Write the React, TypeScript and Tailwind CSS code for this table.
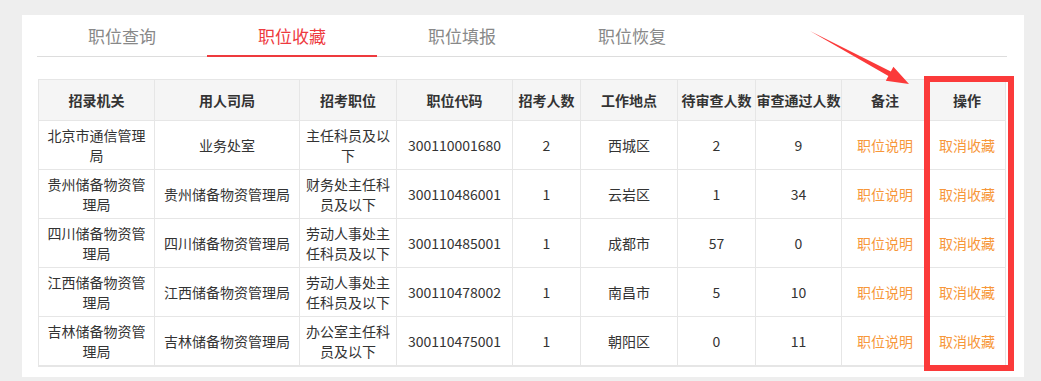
import React from "react";

const rows = [
  ["北京市通信管理局", "业务处室", "主任科员及以下", "300110001680", "2", "西城区", "2", "9"],
  ["贵州储备物资管理局", "贵州储备物资管理局", "财务处主任科员及以下", "300110486001", "1", "云岩区", "1", "34"],
  ["四川储备物资管理局", "四川储备物资管理局", "劳动人事处主任科员及以下", "300110485001", "1", "成都市", "57", "0"],
  ["江西储备物资管理局", "江西储备物资管理局", "劳动人事处主任科员及以下", "300110478002", "1", "南昌市", "5", "10"],
  ["吉林储备物资管理局", "吉林储备物资管理局", "办公室主任科员及以下", "300110475001", "1", "朝阳区", "0", "11"],
];

const headers = ["招录机关", "用人司局", "招考职位", "职位代码", "招考人数", "工作地点", "待审查人数", "审查通过人数", "备注", "操作"];
const widths = [116, 145, 97, 116, 68, 97, 78, 86, 87, 77];
const tabs = ["职位查询", "职位收藏", "职位填报", "职位恢复"];

export default function App() {
  return (
    <div
      className="relative min-h-[381px] bg-[#eeeeee] pt-[15px] pl-[22px]"
      style={{ fontFamily: '"Noto Sans CJK SC", "Noto Sans", sans-serif' }}
    >
      <div className="w-[1002px] h-[362px] bg-white px-[15px]">
        <div className="flex w-[970px] h-[42px] border-b border-[#dddddd]">
          {tabs.map((t, i) => (
            <div
              key={t}
              className={
                i === 1
                  ? "w-[170px] text-center text-[17px] leading-[42px] text-[#ee3a3e] border-b-2 border-[#ee3a3e] -mb-px"
                  : "w-[170px] text-center text-[17px] leading-[42px] text-[#888888]"
              }
            >
              {t}
            </div>
          ))}
        </div>
        <table className="mt-[22px] ml-px border-collapse table-fixed w-[967px] border border-b-2 border-[#e6e6e6] text-[14px] leading-[20px] text-[#333333]">
          <colgroup>
            {widths.map((w, i) => (
              <col key={i} style={{ width: w }} />
            ))}
          </colgroup>
          <thead>
            <tr className="h-[41px] bg-[#f5f5f5]">
              {headers.map((h) => (
                <th key={h} className="border border-[#e6e6e6] font-bold whitespace-nowrap px-0 text-center">
                  {h}
                </th>
              ))}
            </tr>
          </thead>
          <tbody>
            {rows.map((r, ri) => (
              <tr key={ri} className="h-[49px]">
                {r.map((c, ci) => (
                  <td key={ci} className="border border-[#e6e6e6] px-[4px] text-center">
                    {c}
                  </td>
                ))}
                <td className="border border-[#e6e6e6] px-[4px] text-center text-[#f7973a]">职位说明</td>
                <td className="border border-[#e6e6e6] px-[4px] text-center text-[#f7973a]">取消收藏</td>
              </tr>
            ))}
          </tbody>
        </table>
      </div>
      <div className="absolute left-[924px] top-[76px] w-[90px] h-[295px] border-[6px] border-[#fb3a3a] pointer-events-none" />
      <svg className="absolute left-0 top-0 pointer-events-none" width="1041" height="381" viewBox="0 0 1041 381">
        <polygon
          points="810,31 890.8,71.5 893.4,66.7 909,84 885.8,80.7 888.4,75.9"
          fill="#fb3a3a"
        />
      </svg>
    </div>
  );
}
